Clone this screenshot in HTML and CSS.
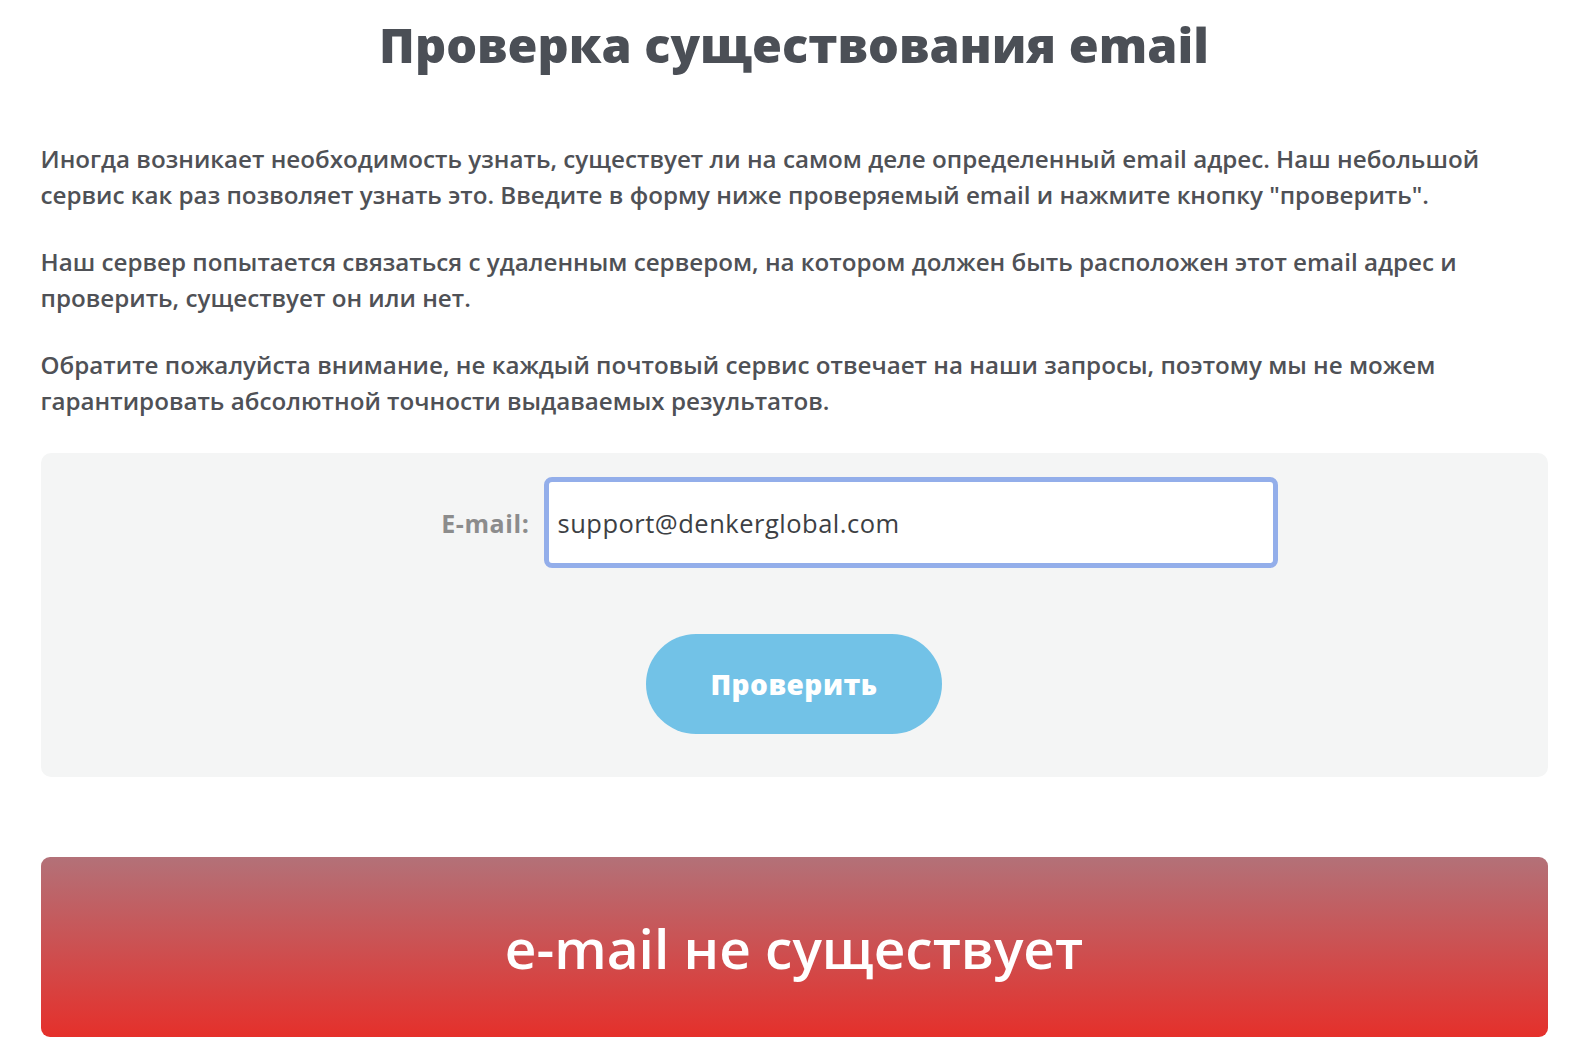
FILE: index.html
```html
<!DOCTYPE html>
<html lang="ru">
<head>
    <meta charset="UTF-8">
    <meta name="viewport" content="width=device-width, initial-scale=1.0">
    <title>Проверка существования email</title>
    <link rel="stylesheet" href="styles.css">
</head>
<body>
    <div class="page">
        <h1 class="title">Проверка существования email</h1>
        <p class="text">Иногда возникает необходимость узнать, существует ли на самом деле определенный email адрес. Наш небольшой сервис как раз позволяет узнать это. Введите в форму ниже проверяемый email и нажмите кнопку "проверить".</p>
        <p class="text">Наш сервер попытается связаться с удаленным сервером, на котором должен быть расположен этот email адрес и проверить, существует он или нет.</p>
        <p class="text">Обратите пожалуйста внимание, не каждый почтовый сервис отвечает на наши запросы, поэтому мы не можем гарантировать абсолютной точности выдаваемых результатов.</p>

        <form class="check-form" onsubmit="return false">
            <div class="field">
                <label class="field-label" for="email">E-mail:</label>
                <input class="field-input" id="email" type="text" value="support@denkerglobal.com">
            </div>
            <button class="check-btn" type="submit">Проверить</button>
        </form>

        <div class="result result-bad">e-mail не существует</div>
    </div>
</body>
</html>
```

FILE: styles.css
```css
body { margin: 0; background: #fff; font-family: "Open Sans", "Liberation Sans", sans-serif; color: #505257; }
.page { width: 1507px; margin: 0 auto; }
.title { margin: 13px 0 0; font-size: 48.5px; line-height: 62px; font-weight: 800; text-align: center; color: #4b4f56; }
.text { margin: 66px 0 0; font-size: 24.2px; line-height: 36px; font-weight: 600; color: #4f5156; }
.text + .text { margin-top: 31px; }

.check-form { margin-top: 34px; background: #f4f5f5; border-radius: 10px; padding: 24px 0 43px; display: flex; flex-direction: column; align-items: center; }
.field { width: 100%; display: grid; grid-template-columns: 1fr 734px 256px; column-gap: 14px; align-items: center; }
.field-label { text-align: right; font-size: 25px; letter-spacing: 0.6px; font-weight: 700; color: #8c8c8c; }
.field-input { box-sizing: border-box; height: 91px; padding: 0 9px; border: 5px solid #93aeea; border-radius: 8px; outline: none; background: #fff; font-family: inherit; font-size: 25.5px; letter-spacing: 0.5px; color: #3d3f44; }
.check-btn { margin-top: 66px; width: 296px; height: 100px; border: none; border-radius: 50px; background: #72c2e7; color: #fff; font-family: inherit; font-size: 28px; font-weight: 800; letter-spacing: 0.5px; cursor: pointer; }

.result { margin-top: 80px; height: 180px; border-radius: 9px; display: flex; align-items: center; justify-content: center; font-size: 55px; font-weight: 600; color: #fff; }
.result-bad { background: linear-gradient(to bottom, #b37178, #e5302b); }
```
